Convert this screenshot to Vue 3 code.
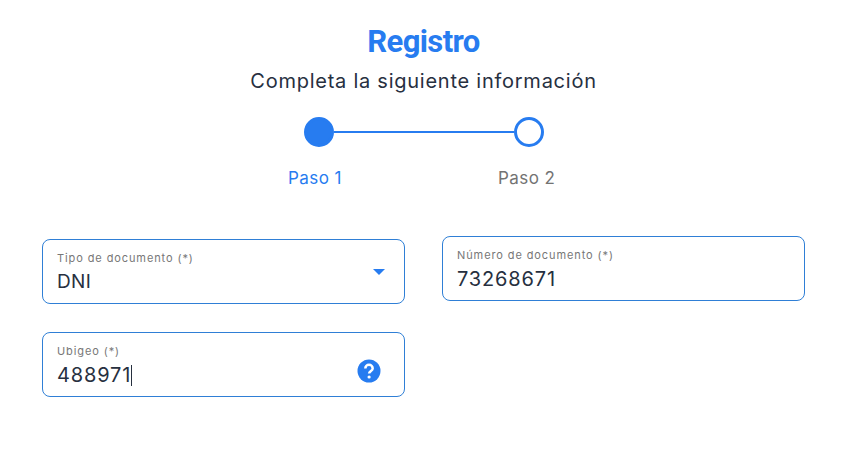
<script setup>
const steps = [
  { label: 'Paso 1', active: true },
  { label: 'Paso 2', active: false }
]
</script>

<template>
  <main class="page">
    <header class="head">
      <h1 class="title">Registro</h1>
      <p class="subtitle">Completa la siguiente información</p>
    </header>

    <div class="stepper">
      <span class="dot filled"></span>
      <span class="line"></span>
      <span class="dot"></span>
    </div>
    <div class="labels">
      <span v-for="s in steps" :key="s.label" class="step-label" :class="{ on: s.active }">{{ s.label }}</span>
    </div>

    <form class="form">
      <div class="col left">
        <div class="field">
          <div class="inner">
            <span class="cap">Tipo de documento (*)</span>
            <span class="val text">DNI</span>
          </div>
          <span class="caret"></span>
        </div>
        <div class="field">
          <div class="inner">
            <span class="cap">Ubigeo (*)</span>
            <span class="val">488971<i class="cursor"></i></span>
          </div>
          <svg class="help" viewBox="0 0 24 24" width="24" height="24">
            <circle cx="12" cy="12" r="11.5" fill="#277cf0" />
            <path d="M8.3 9.4a3.7 3.7 0 0 1 7.4 0c0 2.5-3.6 2.6-3.6 5.2" fill="none" stroke="#fff" stroke-width="2.5" />
            <circle cx="12.1" cy="18" r="1.6" fill="#fff" />
          </svg>
        </div>
      </div>
      <div class="col">
        <div class="field">
          <div class="inner">
            <span class="cap">Número de documento (*)</span>
            <span class="val">73268671</span>
          </div>
        </div>
      </div>
    </form>
  </main>
</template>

<style scoped>
.page {
  width: 858px;
  height: 463px;
  box-sizing: border-box;
  background: #fff;
  padding-top: 24px;
  overflow: hidden;
  font-family: "Inter", "Liberation Sans", sans-serif;
  color: #27303f;
}
.head {
  display: flex;
  flex-direction: column;
  align-items: center;
  padding-right: 11px;
}
.title {
  margin: 0;
  font-family: "Roboto", sans-serif;
  font-size: 31px;
  line-height: 36px;
  font-weight: 700;
  letter-spacing: -0.6px;
  color: #277cf0;
}
.subtitle {
  margin: 9px 0 0;
  font-size: 20px;
  line-height: 24px;
  font-weight: 400;
  letter-spacing: 0.75px;
}
.stepper {
  display: flex;
  align-items: center;
  margin: 24px 0 0 304px;
}
.dot {
  width: 30px;
  height: 30px;
  box-sizing: border-box;
  border: 3px solid #277cf0;
  border-radius: 50%;
  flex: none;
}
.dot.filled { background: #277cf0; }
.line {
  width: 180px;
  height: 2px;
  background: #277cf0;
}
.labels {
  display: flex;
  margin: 20px 0 0 288px;
  gap: 156px;
}
.step-label {
  font-size: 17px;
  line-height: 22px;
  letter-spacing: 0.45px;
  color: #737373;
}
.step-label.on { color: #277cf0; }
.form {
  display: flex;
  gap: 37px;
  margin: 47px 0 0 42px;
}
.col {
  width: 363px;
  display: flex;
  flex-direction: column;
  gap: 28px;
}
.col.left { padding-top: 3px; }
.field {
  height: 65px;
  box-sizing: border-box;
  border: 1px solid #2f7fd6;
  border-radius: 8px;
  display: flex;
  align-items: center;
  justify-content: space-between;
  padding: 0 23px 0 14px;
}
.inner {
  display: flex;
  flex-direction: column;
  padding-top: 3px;
}
.cap {
  font-size: 11px;
  line-height: 14px;
  letter-spacing: 0.9px;
  color: #777;
}
.val {
  margin-top: 4px;
  font-size: 20px;
  line-height: 26px;
  letter-spacing: 0.85px;
  color: #27303f;
  position: relative;
}
.val.text {
  font-size: 19px;
  letter-spacing: 0.3px;
}
.cursor {
  position: absolute;
  top: 3px;
  margin-left: 0;
  width: 1px;
  height: 21px;
  background: #27303f;
}
.caret {
  width: 0;
  height: 0;
  border-left: 6px solid transparent;
  border-right: 6px solid transparent;
  border-top: 6px solid #277cf0;
  margin: 0 -4px 0 0;
}
.help { margin: 12px 0 0; flex: none; }
</style>

<style>
html, body { margin: 0; background: #fff; }
</style>
